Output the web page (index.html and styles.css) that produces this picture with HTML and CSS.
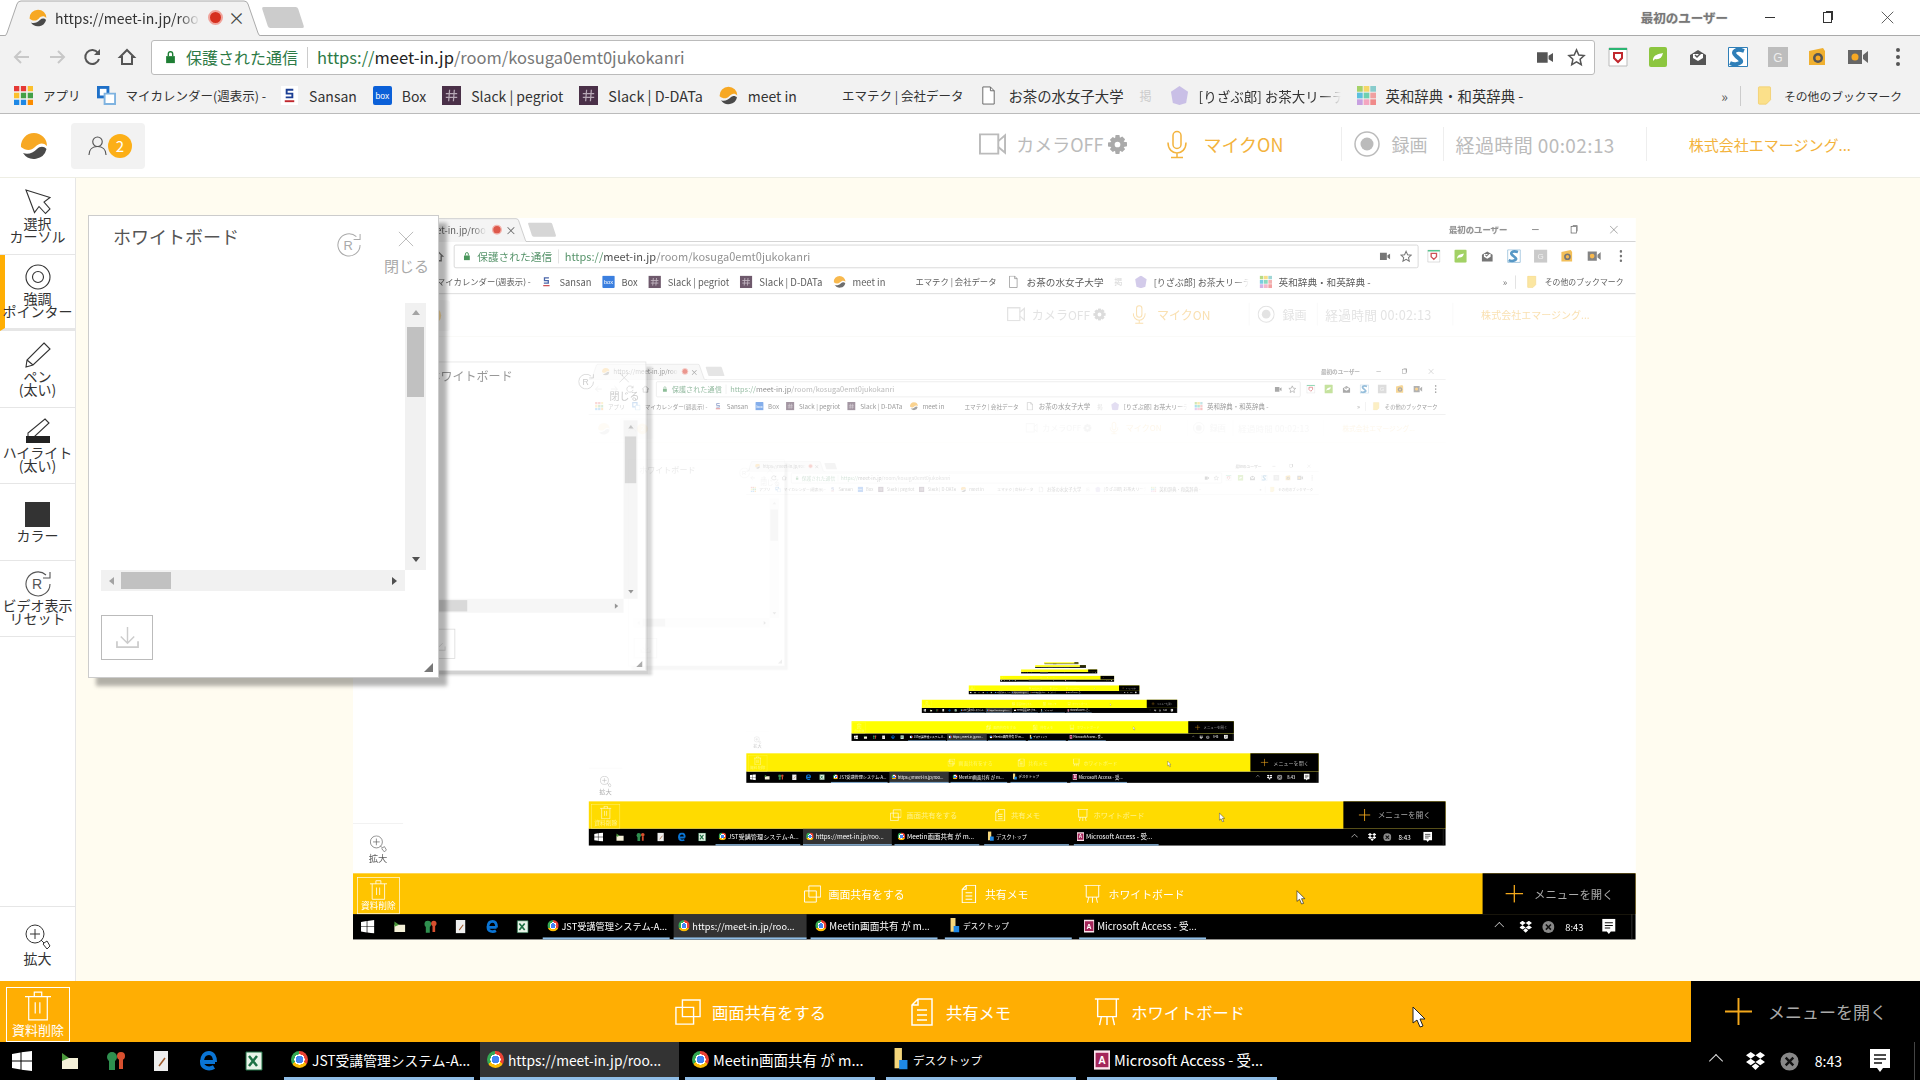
FILE: index.html
```html
<!DOCTYPE html>
<html lang="ja">
<head>
  <meta charset="UTF-8" />
  <title>meet in</title>
  <link rel="stylesheet" href="styles.css">
</head>
<body>
  <!-- icons, reused by every nested copy of the screen -->
  <svg class="sprite" xmlns="http://www.w3.org/2000/svg">
    <symbol id="i-logo" viewBox="0 0 28 28">
      <path fill="#f7a823" d="M14 1a13 13 0 0 1 13 13c-4-4-8-3-12 1s-9 4-14 0A13 13 0 0 1 14 1z"/>
      <path fill="#4a4a4a" d="M26.500 17A13 13 0 0 1 3 21c5 2 10 0 14-4 3-3 7-3 9.500 0z"/>
    </symbol>
    <symbol id="i-person" viewBox="0 0 20 20"><g fill="none" stroke="#555" stroke-width="1.200"><circle cx="10" cy="6" r="5"/><path d="M1 20c0-6 4-9 9-9s9 3 9 9"/></g></symbol>
    <symbol id="i-back" viewBox="0 0 20 20"><path fill="none" stroke="#c8c8c8" stroke-width="2" d="M17 10H3M9 4l-6 6 6 6"/></symbol>
    <symbol id="i-forward" viewBox="0 0 20 20"><path fill="none" stroke="#c8c8c8" stroke-width="2" d="M3 10h14M11 4l6 6-6 6"/></symbol>
    <symbol id="i-reload" viewBox="0 0 20 20"><path fill="none" stroke="#555" stroke-width="2" d="M16 6a7 7 0 1 0 1 6"/><path fill="#555" d="M18 2v6h-6z"/></symbol>
    <symbol id="i-home" viewBox="0 0 20 20"><path fill="none" stroke="#555" stroke-width="2" d="M10 3l7 7h-2v7H5v-7H3z"/></symbol>
    <symbol id="i-lock" viewBox="0 0 12 16"><path fill="#1e7e34" d="M1 7h10v8H1z"/><path fill="none" stroke="#1e7e34" stroke-width="1.600" d="M3.500 7V4.500a2.500 2.500 0 0 1 5 0V7"/></symbol>
    <symbol id="i-cam-fill" viewBox="0 0 18 14"><path fill="#555" d="M0 1h12v12H0zM13 5l5-3v10l-5-3z"/></symbol>
    <symbol id="i-star" viewBox="0 0 20 20"><path fill="none" stroke="#555" stroke-width="1.600" d="M10 2l2.400 5.400 5.600.6-4.200 3.900 1.200 5.700L10 14.700l-5 2.900 1.200-5.700L2 8l5.600-.6z"/></symbol>
    <symbol id="i-ext-shield" viewBox="0 0 20 20"><path fill="#fff" stroke="#bbb" d="M1 1h18v18H1z"/><path fill="#2bb673" d="M1 1h18v2H1z"/><path fill="none" stroke="#c1272d" stroke-width="2" d="M6 6h8v5l-4 4-4-4z"/></symbol>
    <symbol id="i-ext-leaf" viewBox="0 0 20 20"><rect x="1" y="0" width="18" height="20" rx="2" fill="#8cc63f"/><path fill="#fff" d="M5 12c1-4 5-5 10-6-1 5-4 7-8 6l-2 2z"/></symbol>
    <symbol id="i-ext-mail" viewBox="0 0 20 20"><path fill="#555" d="M2 8l8-5 8 5v10H2z"/><path fill="#fff" d="M5 7h10v4l-5 3-5-3z"/><path fill="none" stroke="#555" stroke-width="1.500" d="M7 8l2 2 4-4"/></symbol>
    <symbol id="i-ext-s" viewBox="0 0 20 20"><path fill="#fff" d="M0 0h20v20H0z"/><path fill="none" stroke="#2f7fb8" stroke-width="4" d="M16 4C8 1 3 5 8 9s8 6 1 8c-3 1-5 0-7-1"/><path fill="none" stroke="#2f7fb8" d="M.5.500h19v19H.5z"/></symbol>
    <symbol id="i-ext-g" viewBox="0 0 20 20"><path fill="#bdbdbd" d="M0 0h20v20H0z"/><text x="10" y="14.500" font-size="12" text-anchor="middle" fill="#eee" font-family="Liberation Sans">G</text></symbol>
    <symbol id="i-ext-folder" viewBox="0 0 20 20"><path fill="#f0b030" d="M1 4l14-3 2 3v14H1z"/><circle cx="10" cy="11" r="5" fill="#555"/><circle cx="10" cy="11" r="2.500" fill="#f7a823"/></symbol>
    <symbol id="i-ext-video" viewBox="0 0 20 20"><path fill="#666" d="M0 3h14v14H0zM15 8l5-4v12l-5-4z"/><circle cx="7" cy="10" r="3.500" fill="#f7a823"/></symbol>
    <symbol id="i-dots" viewBox="0 0 4 20"><g fill="#555"><circle cx="2" cy="3" r="2"/><circle cx="2" cy="10" r="2"/><circle cx="2" cy="17" r="2"/></g></symbol>
    <symbol id="i-apps" viewBox="0 0 18 18">
      <g fill="#e53935"><path d="M0 0h5v5H0zM6.500 0h5v5h-5z"/></g><path fill="#fbc02d" d="M13 0h5v5h-5zM0 6.500h5v5H0z"/><path fill="#43a047" d="M6.500 6.500h5v5h-5zM13 6.500h5v5h-5z"/><path fill="#1e88e5" d="M0 13h5v5H0zM6.500 13h5v5h-5z"/><path fill="#fb8c00" d="M13 13h5v5h-5z"/>
    </symbol>
    <symbol id="i-calendar" viewBox="0 0 20 20"><path fill="#1e70c8" d="M0 0h13v13H0z"/><path fill="#fff" d="M3 3h7v7H3z"/><path fill="#fff" stroke="#7fb3e0" stroke-width="2" d="M8 8h11v11H8z"/></symbol>
    <symbol id="i-sansan" viewBox="0 0 18 20"><path fill="#fff" d="M0 0h18v20H0z"/><path fill="#1c3f94" d="M5 3h8v2H7v2h6v6H5v-2h6V9H5z"/><path fill="#c0272d" d="M4 15h10v2H4z"/></symbol>
    <symbol id="i-box" viewBox="0 0 20 20"><rect width="20" height="20" rx="2" fill="#0b60d8"/><text x="10" y="13.500" font-size="9" text-anchor="middle" fill="#fff" font-family="Liberation Sans">box</text></symbol>
    <symbol id="i-slack" viewBox="0 0 20 20"><path fill="#4a3048" d="M0 0h20v20H0z"/><path fill="none" stroke="#b7a9b6" stroke-width="1.300" d="M8 4L7 16M13 4l-1 12M4 8h12M4 12h12"/></symbol>
    <symbol id="i-doc" viewBox="0 0 14 20"><path fill="#fff" stroke="#666" d="M1 1h8l4 4v14H1z"/><path fill="none" stroke="#666" d="M9 1v4h4"/></symbol>
    <symbol id="i-penta" viewBox="0 0 20 20"><path fill="#c9bfe6" d="M10 0l9 6-2 12-7 2-7-2L1 6z"/></symbol>
    <symbol id="i-tiles" viewBox="0 0 20 20"><path fill="#a5d268" d="M0 0h6v6H0z"/><path fill="#f4d768" d="M7 0h6v6H7z"/><path fill="#8cc" d="M14 0h6v6h-6z"/><path fill="#5bc0de" d="M0 7h6v6H0z"/><path fill="#6fd0b0" d="M7 7h6v6H7z"/><path fill="#f0a0a0" d="M14 7h6v6h-6z"/><path fill="#c7a0e0" d="M0 14h6v6H0z"/><path fill="#f4a6c0" d="M7 14h6v6H7z"/><path fill="#f08a8a" d="M14 14h6v6h-6z"/></symbol>
    <symbol id="i-folder" viewBox="0 0 16 22"><path fill="#fbe08a" stroke="#f2d070" d="M1 2q0-1 1-1h12q1 0 1 1v14l-5 5H2q-1 0-1-1z"/></symbol>
    <symbol id="i-camera" viewBox="0 0 28 22"><g fill="none" stroke="#bbb" stroke-width="2"><path d="M1 1h19v20H1z"/><path d="M20 8l7-6v18l-7-6"/></g></symbol>
    <symbol id="i-gear" viewBox="0 0 20 20"><path fill="#aaa" fill-rule="evenodd" d="M8 0h4l.6 3 2.400-1.400L18 4.500 16.500 7l3.500.6v4.300l-3.500.6 1.500 2.500-3 3-2.400-1.500L12 20H8l-.6-3.500L5 18l-3-3 1.500-2.500L0 12V8l3.500-.6L2 5l3-3 2.400 1.400zM10 7a3 3 0 1 0 0 6 3 3 0 0 0 0-6z"/></symbol>
    <symbol id="i-mic" viewBox="0 0 20 28"><g fill="none" stroke="#f3b33d" stroke-width="1.500"><rect x="6" y="1" width="8" height="17" rx="4"/><path d="M1 12c0 14 18 14 18 0M10 22v5M4 27h12"/></g></symbol>
    <symbol id="i-rec" viewBox="0 0 26 26"><circle cx="13" cy="13" r="12" fill="none" stroke="#bbb" stroke-width="1.500"/><circle cx="13" cy="13" r="6.500" fill="#bbb"/></symbol>
    <symbol id="i-arrow" viewBox="0 0 26 26"><path fill="#fff" stroke="#333" stroke-width="1.100" d="M1 1l24 7.500-6 4.500 6 7-4.500 4.500-6.500-7-4.500 6z"/></symbol>
    <symbol id="i-target" viewBox="0 0 26 26"><g fill="none" stroke="#333" stroke-width="1.100"><circle cx="13" cy="13" r="12"/><circle cx="13" cy="13" r="5.500"/></g></symbol>
    <symbol id="i-pen" viewBox="0 0 26 26"><path fill="none" stroke="#333" stroke-width="1.100" d="M19 1l6 6L8 23l-7 2 1-7zM2 18l6 5"/></symbol>
    <symbol id="i-marker" viewBox="0 0 26 26"><path fill="#fff" stroke="#333" stroke-width="1.100" d="M20 1l4 4L9 19H3l0-4z"/><path fill="#222" d="M1 18h24v7H1z"/></symbol>
    <symbol id="i-reset" viewBox="0 0 26 26"><path fill="none" stroke="#555" stroke-width="1.100" d="M21 4a12 12 0 1 0 4 9M25 1v6h-7"/><text x="12" y="18" font-size="14" text-anchor="middle" fill="#555" font-family="Liberation Sans">R</text></symbol>
    <symbol id="i-reset-light" viewBox="0 0 26 26"><path fill="none" stroke="#aaa" stroke-width="1.100" d="M21 4a12 12 0 1 0 4 9M25 1v6h-7"/><text x="12" y="18" font-size="14" text-anchor="middle" fill="#aaa" font-family="Liberation Sans">R</text></symbol>
    <symbol id="i-close" viewBox="0 0 18 18"><path fill="none" stroke="#bbb" stroke-width="1.100" d="M1 1l16 16M17 1L1 17"/></symbol>
    <symbol id="i-download" viewBox="0 0 24 24"><g fill="none" stroke="#ccc" stroke-width="1.500"><path d="M12 1v16M5 11l7 7 7-7"/><path d="M1 16v6h22v-6" stroke-width="1.800"/></g></symbol>
    <symbol id="i-zoom" viewBox="0 0 26 26"><g fill="none" stroke="#333" stroke-width="1"><circle cx="10" cy="10" r="9"/><path d="M10 5v10M5 10h10M16 16l3 3M19 19l3-2 3 5-3 3-4-5z"/></g></symbol>
    <symbol id="i-trash" viewBox="0 0 28 32"><g fill="none" stroke="#fff" stroke-width="1.300"><path d="M0 6h28M10 6V1h8v5M4 6v25h20V6M11 12v12M16 12v12"/></g></symbol>
    <symbol id="i-share" viewBox="0 0 28 28"><g fill="none" stroke="#fff" stroke-width="1.500"><path d="M8 1h19v18H8z"/><path d="M1 9h19v18H1z"/></g></symbol>
    <symbol id="i-memo" viewBox="0 0 22 28"><path fill="none" stroke="#fff" stroke-width="1.500" d="M7 1h14v26H1V7zM7 1v6H1M6 12h10M6 17h10M6 22h10"/></symbol>
    <symbol id="i-board" viewBox="0 0 26 30"><path fill="none" stroke="#fff" stroke-width="1.500" d="M0 1h26M3 1v19h20V1M7 20l-2 9M13 20v9M19 20l2 9"/></symbol>
    <symbol id="i-plus" viewBox="0 0 28 28"><path fill="none" stroke="#f3a81c" stroke-width="2" d="M14 0v28M0 14h28"/></symbol>
    <symbol id="i-pointer" viewBox="0 0 14 22"><path fill="#fff" stroke="#222" d="M1 1v16l4-3 3 7 3-1-3-7h5z"/></symbol>
    <symbol id="i-win" viewBox="0 0 20 20"><path fill="#fff" d="M0 3l8.500-1.500v8H0zM9.500 1.300L20 0v9.500H9.500zM0 10.500h8.500v8L0 17zM9.500 10.500H20V20L9.500 18.700z"/></symbol>
    <symbol id="i-mailer" viewBox="0 0 20 20"><path fill="#f4f0d8" d="M2 7h16v11H2z"/><path fill="#4c9a3c" d="M2 2l7 5-7 3z"/></symbol>
    <symbol id="i-keys" viewBox="0 0 20 20"><circle cx="6" cy="6" r="5" fill="#2f8f4f"/><path fill="#2f8f4f" d="M3 10h6v9H3z"/><circle cx="15" cy="5" r="4" fill="#d8502f"/><path fill="#d8502f" d="M13 8h4v10h-4z"/></symbol>
    <symbol id="i-notes" viewBox="0 0 18 20"><path fill="#eee" d="M1 0h14v20H1z"/><path fill="none" stroke="#a05a2c" stroke-width="1.500" d="M6 15l6-8"/></symbol>
    <symbol id="i-edge" viewBox="0 0 20 20"><path fill="none" stroke="#0a74d4" stroke-width="4" d="M17 11H4c0 6 7 8 12 5M4 11c0-6 3-9 7-9 4 0 6 4 6 9"/></symbol>
    <symbol id="i-excel" viewBox="0 0 20 20"><path fill="#e8f3e8" stroke="#1e7145" d="M2 1h16v18H2z"/><path fill="none" stroke="#1e7145" stroke-width="2.500" d="M5 5l8 10M13 5l-8 10"/></symbol>
    <symbol id="i-explorer" viewBox="0 0 16 26"><path fill="#f5d67b" d="M1 0h8v22H1z"/><path fill="#1e88e5" d="M6 13h9v10H6z"/></symbol>
    <symbol id="i-access" viewBox="0 0 20 24"><path fill="#fce4ec" d="M0 0h20v24H0z"/><path fill="#a4265a" d="M2 3h16v18H2z"/><text x="10" y="17" font-size="13" font-weight="700" text-anchor="middle" fill="#fff" font-family="Liberation Sans">A</text></symbol>
    <symbol id="i-dropbox" viewBox="0 0 20 20"><path fill="#fff" d="M5 0l5 3.500L5 7 0 3.500zM15 0l5 3.500L15 7l-5-3.500zM5 7l5 3.500L5 14l-5-3.500zM15 7l5 3.500L15 14l-5-3.500zM10 12l4 3-4 4-4-4z"/></symbol>
    <symbol id="i-xcircle" viewBox="0 0 20 20"><circle cx="10" cy="10" r="9.500" fill="#888"/><path stroke="#111" stroke-width="2.500" d="M6 6l8 8M14 6l-8 8"/></symbol>
    <symbol id="i-chat" viewBox="0 0 20 24"><path fill="#fff" d="M0 0h20v19h-7l-3 4-3-4H0z"/><path stroke="#111" stroke-width="1.500" d="M4 6h12M4 10h12M4 14h8"/></symbol>
    <symbol id="i-tab" viewBox="0 0 265 36"><path fill="#f2f2f2" stroke="#aaa" d="M0 36h4q2 0 3-3L17 4q1-3 4-3h223q3 0 4 3l10 29q1 3 3 3h4"/></symbol>
  </svg>

  <div class="screen">
    <div class="browser">
      <div class="tabstrip">
        <div class="tab">
          <svg class="tab-shape"><use href="#i-tab"/></svg>
          <svg class="tab-favicon"><use href="#i-logo"/></svg>
          <span class="tab-title">https://meet-in.jp/room/kosuga0emt0jukokanri</span>
          <span class="tab-rec"></span>
          <span class="tab-close">×</span>
        </div>
        <div class="newtab"></div>
        <div class="user-name">最初のユーザー</div>
        <div class="win-btns">
          <span class="win-min"></span>
          <span class="win-max"></span>
          <svg class="win-close"><use href="#i-close"/></svg>
        </div>
      </div>

      <div class="toolbar">
        <svg class="nav-ico"><use href="#i-back"/></svg>
        <svg class="nav-ico"><use href="#i-forward"/></svg>
        <svg class="nav-ico"><use href="#i-reload"/></svg>
        <svg class="nav-ico"><use href="#i-home"/></svg>
        <div class="omnibox">
          <svg class="lock"><use href="#i-lock"/></svg>
          <span class="secure">保護された通信</span>
          <span class="url"><span class="url-scheme">https://</span><span class="url-host">meet-in.jp</span>/room/kosuga0emt0jukokanri</span>
          <svg class="omni-cam"><use href="#i-cam-fill"/></svg>
          <svg class="omni-star"><use href="#i-star"/></svg>
        </div>
        <div class="extensions">
          <svg class="ext"><use href="#i-ext-shield"/></svg>
          <svg class="ext"><use href="#i-ext-leaf"/></svg>
          <svg class="ext"><use href="#i-ext-mail"/></svg>
          <svg class="ext"><use href="#i-ext-s"/></svg>
          <svg class="ext"><use href="#i-ext-g"/></svg>
          <svg class="ext"><use href="#i-ext-folder"/></svg>
          <svg class="ext"><use href="#i-ext-video"/></svg>
          <svg class="ext-dots"><use href="#i-dots"/></svg>
        </div>
      </div>

      <div class="bookmarks">
        <span class="bm bm-kana"><svg class="bm-ico"><use href="#i-apps"/></svg><span>アプリ</span></span>
        <span class="bm bm-kana bm-cal"><svg class="bm-ico"><use href="#i-calendar"/></svg><span>マイカレンダー(週表示) -</span></span>
        <span class="bm"><svg class="bm-ico"><use href="#i-sansan"/></svg>Sansan</span>
        <span class="bm"><svg class="bm-ico"><use href="#i-box"/></svg>Box</span>
        <span class="bm"><svg class="bm-ico"><use href="#i-slack"/></svg>Slack | pegriot</span>
        <span class="bm bm-ddata"><svg class="bm-ico"><use href="#i-slack"/></svg>Slack | D-DATa</span>
        <span class="bm"><svg class="bm-ico"><use href="#i-logo"/></svg>meet in</span>
        <span class="bm bm-kana"><span class="bm-ico"></span><span>エマテク | 会社データ</span></span>
        <span class="bm bm-wide"><svg class="bm-ico"><use href="#i-doc"/></svg>お茶の水女子大学</span>
        <span class="bm bm-faint">掲</span>
        <span class="bm"><svg class="bm-ico"><use href="#i-penta"/></svg><span class="bm-fade">[りざぶ郎] お茶大リーディング</span></span>
        <span class="bm bm-wide"><svg class="bm-ico"><use href="#i-tiles"/></svg>英和辞典・和英辞典 -</span>
        <span class="bm-more">»</span>
        <span class="bm bm-kana bm-other"><svg class="bm-ico"><use href="#i-folder"/></svg><span>その他のブックマーク</span></span>
      </div>
    </div>

    <header class="app-head">
      <svg class="app-logo"><use href="#i-logo"/></svg>
      <div class="members">
        <svg class="members-ico"><use href="#i-person"/></svg>
        <span class="members-count">2</span>
      </div>
      <div class="controls">
        <div class="ctl ctl-camera">
          <svg class="ctl-cam-ico"><use href="#i-camera"/></svg>
          <span>カメラOFF</span>
          <svg class="ctl-gear"><use href="#i-gear"/></svg>
        </div>
        <div class="ctl ctl-mic">
          <svg class="ctl-mic-ico"><use href="#i-mic"/></svg>
          <span>マイクON</span>
        </div>
        <div class="ctl ctl-rec">
          <svg class="ctl-rec-ico"><use href="#i-rec"/></svg>
          <span>録画</span>
        </div>
        <div class="ctl ctl-time">経過時間 00:02:13</div>
        <div class="ctl ctl-company">株式会社エマージング...</div>
      </div>
    </header>

    <div class="stage">
      <nav class="sidebar">
        <div class="tool"><svg class="tool-ico"><use href="#i-arrow"/></svg><span class="tool-label">選択<br>カーソル</span></div>
        <div class="tool tool-active"><svg class="tool-ico"><use href="#i-target"/></svg><span class="tool-label">強調<br>ポインター</span></div>
        <div class="tool"><svg class="tool-ico"><use href="#i-pen"/></svg><span class="tool-label">ペン<br>(太い)</span></div>
        <div class="tool"><svg class="tool-ico"><use href="#i-marker"/></svg><span class="tool-label">ハイライト<br>(太い)</span></div>
        <div class="tool"><span class="color-chip"></span><span class="tool-label">カラー</span></div>
        <div class="tool"><svg class="tool-ico"><use href="#i-reset"/></svg><span class="tool-label">ビデオ表示<br>リセット</span></div>
        <div class="tool tool-zoom"><svg class="tool-ico"><use href="#i-zoom"/></svg><span class="tool-label">拡大</span></div>
      </nav>

      <main class="canvas">
        <div class="shot"></div>

        <section class="panel">
          <div class="panel-head">
            <h2 class="panel-title">ホワイトボード</h2>
            <svg class="panel-reset"><use href="#i-reset-light"/></svg>
            <div class="panel-close">
              <svg class="panel-x"><use href="#i-close"/></svg>
              <span>閉じる</span>
            </div>
          </div>
          <div class="board">
            <div class="board-area"></div>
            <div class="vbar">
              <span class="arrow-up"></span>
              <span class="vthumb"></span>
              <span class="arrow-down"></span>
            </div>
            <div class="hbar">
              <span class="arrow-left"></span>
              <span class="hthumb"></span>
              <span class="arrow-right"></span>
            </div>
          </div>
          <div class="save-btn"><svg class="save-ico"><use href="#i-download"/></svg></div>
          <span class="grip"></span>
        </section>
      </main>
    </div>

    <footer class="bottom-bar">
      <div class="trash">
        <svg class="trash-ico"><use href="#i-trash"/></svg>
        <span class="trash-label">資料削除</span>
      </div>
      <div class="actions">
        <div class="action"><svg class="action-ico"><use href="#i-share"/></svg><span>画面共有をする</span></div>
        <div class="action"><svg class="action-ico"><use href="#i-memo"/></svg><span>共有メモ</span></div>
        <div class="action"><svg class="action-ico"><use href="#i-board"/></svg><span>ホワイトボード</span></div>
      </div>
      <svg class="cursor"><use href="#i-pointer"/></svg>
      <div class="menu-open">
        <svg class="menu-plus"><use href="#i-plus"/></svg>
        <span>メニューを開く</span>
      </div>
    </footer>

    <div class="taskbar">
      <svg class="start"><use href="#i-win"/></svg>
      <div class="pinned">
        <svg class="pin"><use href="#i-mailer"/></svg>
        <svg class="pin"><use href="#i-keys"/></svg>
        <svg class="pin"><use href="#i-notes"/></svg>
        <svg class="pin"><use href="#i-edge"/></svg>
        <svg class="pin"><use href="#i-excel"/></svg>
      </div>
      <div class="tasks">
        <div class="task task-tight"><span class="chrome-ico"></span><span>JST受講管理システム-A...</span></div>
        <div class="task task-active task-tight"><span class="chrome-ico"></span><span>https://meet-in.jp/roo...</span></div>
        <div class="task"><span class="chrome-ico"></span><span>Meetin画面共有 が m...</span></div>
        <div class="task task-wide task-kana"><svg class="task-ico"><use href="#i-explorer"/></svg><span>デスクトップ</span></div>
        <div class="task task-wide"><svg class="task-ico"><use href="#i-access"/></svg><span>Microsoft Access - 受...</span></div>
      </div>
      <div class="tray">
        <span class="tray-up"></span>
        <svg class="tray-ico"><use href="#i-dropbox"/></svg>
        <svg class="tray-ico"><use href="#i-xcircle"/></svg>
        <span class="clock">8:43</span>
        <svg class="tray-chat"><use href="#i-chat"/></svg>
        <span class="tray-edge"></span>
      </div>
    </div>
  </div>

  <script src="script.js"></script>
</body>
</html>
```

FILE: styles.css
```css
* {
  box-sizing: border-box;
}

body {
  margin: 0;
  overflow: hidden;
  background: #fff;
  font-family: "Noto Sans CJK JP", "Noto Sans", sans-serif;
  color: #333;
}

.sprite {
  display: none;
}

svg {
  display: block;
  flex: none;
}

/* one whole screen. the shared screen shows a smaller copy of itself */
.screen {
  --bar: #ffae03;
  --bar-ink: #fff;
  --chrome-bg: #f2f2f2;
  --stage-bg: #fffcf0;
  --chrome-fade: 1;
  --chrome-vis: visible;
  --head-fade: 1;
  --head-vis: visible;
  --side-vis: visible;
  --zoom-fade: 1;
  --panel-fade: 1;
  --panel-vis: visible;
  display: flex;
  flex-direction: column;
  width: 1920px;
  height: 1080px;
  background: #fff;
}

.depth-1 {
  --bar: #ffc400;
  --chrome-bg: #fff;
  --stage-bg: #fff;
  --chrome-fade: 0.8;
  --head-fade: 0.4;
  --side-vis: hidden;
  --zoom-fade: 0.8;
  --panel-fade: 0.6;
}

.depth-2 {
  --bar: #ffdb00;
  --bar-ink: #fff38a;
  --chrome-bg: #fff;
  --stage-bg: #fff;
  --chrome-fade: 0.5;
  --head-fade: 0.1;
  --side-vis: hidden;
  --zoom-fade: 0.4;
  --panel-fade: 0.12;
}

.depth-3 {
  --bar: #ffee00;
  --bar-ink: #fff96a;
  --chrome-bg: #fff;
  --stage-bg: #fff;
  --chrome-fade: 0.2;
  --head-vis: hidden;
  --side-vis: hidden;
  --zoom-fade: 0.25;
  --panel-vis: hidden;
}

.depth-4 {
  --bar: #ffff00;
  --bar-ink: #ffff66;
  --chrome-bg: #fff;
  --stage-bg: #fff;
  --chrome-vis: hidden;
  --head-vis: hidden;
  --side-vis: hidden;
  --zoom-fade: 0;
  --panel-vis: hidden;
}

/* browser chrome */
.browser {
  flex: none;
  opacity: var(--chrome-fade);
  visibility: var(--chrome-vis);
}

.tabstrip {
  display: flex;
  align-items: center;
  height: 36px;
  border-bottom: 1px solid #aaa;
  background: #fff;
}

.tab {
  position: relative;
  display: flex;
  align-items: center;
  width: 265px;
  height: 36px;
  padding-left: 29px;
  font-size: 14px;
}

.tab-shape {
  position: absolute;
  left: 0;
  top: 0;
  width: 265px;
  height: 36px;
}

.tab-favicon {
  position: relative;
  width: 18px;
  height: 18px;
}

.tab-title {
  position: relative;
  width: 145px;
  margin-left: 8px;
  overflow: hidden;
  white-space: nowrap;
  -webkit-mask-image: linear-gradient(90deg, #000 85%, transparent);
  mask-image: linear-gradient(90deg, #000 85%, transparent);
}

.tab-rec {
  position: relative;
  width: 15px;
  height: 15px;
  margin-left: 8px;
  border: 2px solid #f0a49c;
  border-radius: 50%;
  background: #d6301f;
}

.tab-close {
  position: relative;
  margin-left: 5px;
  font-size: 17px;
  line-height: 1;
  color: #444;
}

.newtab {
  width: 36px;
  height: 21px;
  margin-left: 0;
  border-radius: 2px;
  background: #ccc;
  transform: skewX(18deg);
}

.user-name {
  margin-left: auto;
  font-size: 12.500px;
  font-weight: 700;
  color: #777;
  text-shadow: 0 0 2px #fff, 0 0 1px #888;
}

.win-btns {
  display: flex;
  align-items: center;
  margin-left: 37px;
  margin-right: 26px;
}

.win-min {
  width: 10px;
  height: 1px;
  background: #333;
}

.win-max {
  width: 9px;
  height: 11px;
  margin-left: 48px;
  border: 1px solid #333;
  box-shadow: 2px -2px 0 -1px #333;
}

.win-close {
  width: 13px;
  height: 13px;
  margin-left: 49px;
  filter: brightness(0.3);
}

.toolbar {
  display: flex;
  align-items: center;
  height: 42px;
  padding-left: 12px;
  background: var(--chrome-bg);
}

.nav-ico {
  width: 20px;
  height: 20px;
  margin-right: 15px;
}

.omnibox {
  display: flex;
  align-items: center;
  width: 1444px;
  height: 35px;
  margin-left: -1px;
  padding: 0 8px 0 13px;
  border: 1px solid #bbb;
  border-radius: 3px;
  background: #fff;
}

.lock {
  width: 11px;
  height: 14px;
}

.secure {
  margin-left: 10px;
  padding-right: 9px;
  border-right: 1px solid #ccc;
  font-size: 16px;
  line-height: 21px;
  color: #2d7a46;
}

.url {
  margin-left: 9px;
  font-size: 16.500px;
  color: #777;
}

.url-scheme {
  color: #2d7a46;
}

.url-host {
  color: #222;
}

.omni-cam {
  width: 16px;
  height: 13px;
  margin-left: auto;
}

.omni-star {
  width: 19px;
  height: 19px;
  margin-left: 14px;
}

.extensions {
  display: flex;
  align-items: center;
  gap: 20px;
  margin-left: 13px;
}

.ext {
  width: 20px;
  height: 20px;
}

.ext-dots {
  width: 4px;
  height: 20px;
  margin-left: 8px;
}

.bookmarks {
  display: flex;
  align-items: center;
  height: 36px;
  padding-left: 14px;
  border-bottom: 1px solid #bbb;
  background: var(--chrome-bg);
  font-size: 14px;
  white-space: nowrap;
}

.bm {
  display: flex;
  align-items: center;
  gap: 10px;
  margin-right: 16px;
}

.bm-kana {
  font-size: 12.500px;
}

.bm-cal {
  margin-right: 14px;
}

.bm-ddata {
  font-size: 14.400px;
}

.bm-wide {
  font-size: 14.400px;
}

.bm-ico {
  width: 19px;
  height: 19px;
}

.bm-faint {
  color: #ccc;
  font-size: 12px;
  margin-right: 18px;
}

.bm-fade {
  width: 142px;
  overflow: hidden;
  font-size: 13.500px;
  -webkit-mask-image: linear-gradient(90deg, #000 85%, transparent);
  mask-image: linear-gradient(90deg, #000 85%, transparent);
}

.bm-more {
  margin-left: auto;
  padding-right: 12px;
  border-right: 1px solid #ccc;
  color: #555;
}

.bm-other {
  margin-left: 14px;
  margin-right: 18px;
  font-size: 11.800px;
}

/* meeting header */
.app-head {
  flex: none;
  display: flex;
  align-items: center;
  height: 64px;
  padding-left: 20px;
  border-bottom: 1px solid #eeeee4;
  background: #fff;
  opacity: var(--head-fade);
  visibility: var(--head-vis);
}

.app-logo {
  width: 28px;
  height: 28px;
}

.members {
  display: flex;
  align-items: center;
  width: 74px;
  height: 46px;
  margin-left: 23px;
  padding-left: 17px;
  border-radius: 4px;
  background: #f2f2f2;
}

.members-ico {
  width: 19px;
  height: 19px;
}

.members-count {
  width: 24px;
  height: 24px;
  margin-left: 1px;
  border-radius: 50%;
  background: #fcaf17;
  color: #fff;
  font-size: 15px;
  line-height: 24px;
  text-align: center;
}

.controls {
  display: flex;
  align-items: center;
  margin-left: auto;
  margin-bottom: 3px;
  font-size: 18px;
  color: #bbb;
  white-space: nowrap;
}

.ctl {
  display: flex;
  align-items: center;
  height: 34px;
}

.ctl-cam-ico {
  width: 27px;
  height: 22px;
  margin-right: 10px;
}

.ctl-gear {
  width: 19px;
  height: 19px;
  margin-left: 5px;
}

.ctl-mic {
  margin-left: 40px;
  padding-right: 58px;
  border-right: 1px solid #eee;
  color: #f3b33d;
}

.ctl-mic-ico {
  width: 20px;
  height: 29px;
  margin-right: 16px;
}

.ctl-rec {
  padding: 0 16px 0 12px;
  border-right: 1px solid #eee;
}

.ctl-rec-ico {
  width: 26px;
  height: 26px;
  margin-right: 11px;
}

.ctl-time {
  padding: 0 31px 0 11px;
  border-right: 1px solid #eee;
  font-size: 19px;
  letter-spacing: 0.400px;
}

.ctl-company {
  margin: 0 69px 0 42px;
  font-size: 15px;
  color: #f3b33d;
}

/* tools and shared area */
.stage {
  flex: 1;
  display: flex;
  min-height: 0;
}

.sidebar {
  flex: none;
  display: flex;
  flex-direction: column;
  width: 76px;
  border-right: 1px solid #e6e6e6;
  background: #fff;
  visibility: var(--side-vis);
}

.tool {
  display: flex;
  flex-direction: column;
  align-items: center;
  justify-content: center;
  gap: 2px;
  height: 76.500px;
  border-bottom: 1px solid #e6e6e6;
}

.tool-active {
  border-left: 5px solid #ffae03;
  border-bottom: 3px solid #e6e6e6;
  padding-right: 5px;
}

.tool-ico {
  width: 26px;
  height: 26px;
}

.tool-label {
  font-size: 14px;
  line-height: 13px;
  text-align: center;
  white-space: nowrap;
}

.color-chip {
  width: 25px;
  height: 25px;
  background: #333;
}

.tool-zoom {
  margin-top: auto;
  height: 75px;
  border-top: 1px solid #e6e6e6;
  border-bottom: 0;
  visibility: visible;
  opacity: var(--zoom-fade);
}

.canvas {
  position: relative;
  flex: 1;
  background: var(--stage-bg);
}

.shot {
  position: absolute;
  left: 277px;
  top: 40px;
  width: 1920px;
  height: 1080px;
  transform: scale(0.668);
  transform-origin: 0 0;
}

/* whiteboard window */
.panel {
  position: absolute;
  left: 12px;
  top: 37px;
  width: 351px;
  height: 463px;
  border: 1px solid #ccc;
  background: #fff;
  box-shadow: 8px 8px 4px rgba(0, 0, 0, 0.3);
  opacity: var(--panel-fade);
  visibility: var(--panel-vis);
}

.panel-head {
  display: flex;
  height: 87px;
  padding: 7px 9px 0 24px;
}

.panel-title {
  margin: 0;
  font-size: 18px;
  font-weight: 400;
  line-height: 26px;
  color: #555;
}

.panel-reset {
  width: 24px;
  height: 24px;
  margin: 10px 0 0 auto;
}

.panel-close {
  display: flex;
  flex-direction: column;
  align-items: center;
  margin: 8px 0 0 23px;
  font-size: 15px;
  line-height: 22px;
  color: #aaa;
}

.panel-x {
  width: 16px;
  height: 16px;
  margin-bottom: 8px;
}

.board {
  display: grid;
  grid-template-columns: 304px 21px;
  grid-template-rows: 267px 21px;
  margin-left: 12px;
}

.vbar {
  display: flex;
  flex-direction: column;
  align-items: center;
  background: #f1f1f1;
}

.hbar {
  display: flex;
  align-items: center;
  background: #f1f1f1;
}

.vthumb {
  width: 17px;
  height: 70px;
  margin-top: 12px;
  background: #c1c1c1;
}

.hthumb {
  width: 50px;
  height: 17px;
  margin-left: 7px;
  background: #c1c1c1;
}

.arrow-up,
.arrow-down {
  width: 0;
  height: 0;
  border-left: 4px solid transparent;
  border-right: 4px solid transparent;
}

.arrow-up {
  margin-top: 7px;
  border-bottom: 5px solid #a3a3a3;
}

.arrow-down {
  margin-top: auto;
  margin-bottom: 8px;
  border-top: 5px solid #505050;
}

.arrow-left,
.arrow-right {
  width: 0;
  height: 0;
  border-top: 4px solid transparent;
  border-bottom: 4px solid transparent;
}

.arrow-left {
  margin-left: 8px;
  border-right: 5px solid #a3a3a3;
}

.arrow-right {
  margin-left: auto;
  margin-right: 8px;
  border-left: 5px solid #505050;
}

.save-btn {
  display: flex;
  align-items: center;
  justify-content: center;
  width: 52px;
  height: 45px;
  margin: 24px 0 0 12px;
  border: 1px solid #bbb;
}

.save-ico {
  width: 23px;
  height: 23px;
}

.grip {
  position: absolute;
  right: 5px;
  bottom: 5px;
  width: 0;
  height: 0;
  border-left: 9px solid transparent;
  border-bottom: 9px solid #777;
}

/* orange bar */
.bottom-bar {
  position: relative;
  flex: none;
  display: flex;
  height: 61px;
  padding-left: 6px;
  background: var(--bar);
  color: var(--bar-ink);
}

.trash {
  display: flex;
  flex-direction: column;
  align-items: center;
  width: 64px;
  height: 55px;
  margin-top: 6px;
  padding-top: 3px;
  border: 1px solid var(--bar-ink);
  font-size: 13px;
  line-height: 18px;
  white-space: nowrap;
}

.trash-ico {
  width: 26px;
  height: 30px;
}

.actions {
  display: flex;
  align-items: center;
  gap: 83px;
  margin-left: 605px;
  font-size: 16.300px;
  white-space: nowrap;
}

.action {
  display: flex;
  align-items: center;
  gap: 11px;
}

.action-ico {
  width: 26px;
  height: 28px;
}

.cursor {
  position: absolute;
  left: 1412px;
  top: 25px;
  width: 14px;
  height: 22px;
}

.menu-open {
  display: flex;
  align-items: center;
  width: 229px;
  margin-left: auto;
  padding-left: 34px;
  background: #000;
  color: #aaa;
  font-size: 17px;
  white-space: nowrap;
}

.menu-plus {
  width: 27px;
  height: 27px;
  margin-right: 16px;
}

/* windows taskbar */
.taskbar {
  flex: none;
  display: flex;
  align-items: center;
  height: 38px;
  padding-left: 12px;
  background: #000;
  color: #fff;
  font-size: 14.500px;
  white-space: nowrap;
}

.start {
  width: 20px;
  height: 20px;
}

.pinned {
  display: flex;
  gap: 26px;
  margin-left: 28px;
}

.pin {
  width: 20px;
  height: 20px;
}

.tasks {
  display: flex;
  align-self: stretch;
  gap: 6px;
  margin-left: 20px;
}

.task {
  display: flex;
  align-items: center;
  gap: 4px;
  width: 190px;
  padding-left: 7px;
  border-bottom: 3px solid #8fbde6;
  overflow: hidden;
}

.task-active {
  width: 199px;
  background: #333;
}

.task-tight {
  font-size: 13.800px;
}

.task-kana {
  font-size: 11.500px;
}

.task-wide {
  margin-left: 5px;
}

.chrome-ico {
  flex: none;
  width: 17px;
  height: 17px;
  border-radius: 50%;
  background:
    radial-gradient(circle, #4285f4 0 30%, #fff 31% 42%, transparent 43%),
    conic-gradient(#ea4335 0 120deg, #fbbc05 120deg 240deg, #34a853 240deg);
}

.task-ico {
  width: 16px;
  height: 24px;
}

.tray {
  display: flex;
  align-items: center;
  margin-left: auto;
  height: 100%;
  padding-right: 5px;
}

.tray-up {
  width: 10px;
  height: 10px;
  border-top: 1.500px solid #ddd;
  border-left: 1.500px solid #ddd;
  transform: rotate(45deg);
}

.tray-ico {
  width: 19px;
  height: 19px;
  margin-left: 25px;
}

.tray-ico + .tray-ico {
  margin-left: 15px;
}

.clock {
  margin-left: 16px;
  font-size: 14px;
}

.tray-chat {
  width: 20px;
  height: 24px;
  margin-left: 28px;
}

.tray-edge {
  width: 1px;
  height: 100%;
  margin-left: 24px;
  background: #444;
}
```

FILE: script.js
```js
// the shared screen shows the page itself, so copy it into its own canvas a few times
const first = document.querySelector('.screen');
const blank = first.cloneNode(true);

let shot = first.querySelector('.shot');

for (let depth = 1; depth <= 10; depth++) {
  const copy = blank.cloneNode(true);
  copy.classList.add('depth-' + Math.min(depth, 4));

  // past this depth the words are smaller than a pixel, only the bars still show.
  // the fixed-height rows stay so each copy keeps its place
  if (depth > 6) {
    copy.querySelectorAll('.tabstrip > *, .toolbar > *, .bookmarks > *, .app-head > *, .sidebar > *, .panel, .trash-label, .action span, .menu-open span, .task span, .clock').forEach(el => el.remove());
  }

  shot.appendChild(copy);
  shot = copy.querySelector('.shot');
}
```
